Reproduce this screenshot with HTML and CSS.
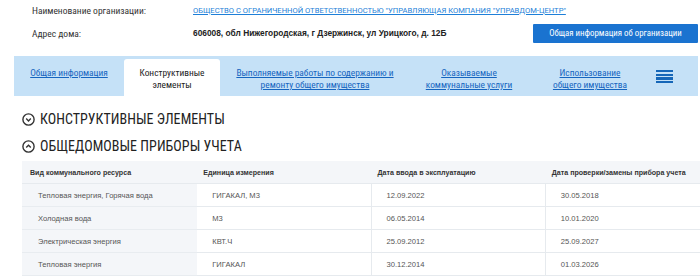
FILE: index.html
```html
<!DOCTYPE html>
<html lang="ru">
<head>
<meta charset="utf-8">
<link rel="stylesheet" href="styles.css">
</head>
<body>
<div class="page">
  <div class="info">
    <div class="info-row">
      <div class="label">Наименование организации:</div>
      <a class="org-link" href="#">ОБЩЕСТВО С ОГРАНИЧЕННОЙ ОТВЕТСТВЕННОСТЬЮ "УПРАВЛЯЮЩАЯ КОМПАНИЯ "УПРАВДОМ-ЦЕНТР"</a>
    </div>
    <div class="info-row row2">
      <div class="label">Адрес дома:</div>
      <div class="address">606008, обл Нижегородская, г Дзержинск, ул Урицкого, д. 12Б</div>
      <div class="btn">Общая информация об организации</div>
    </div>
  </div>

  <nav class="tabs">
    <a class="tab t1" href="#"><span>Общая информация</span></a>
    <div class="tab t2 active"><span>Конструктивные<br>элементы</span></div>
    <a class="tab t3" href="#"><span>Выполняемые работы по содержанию и<br>ремонту общего имущества</span></a>
    <a class="tab t4" href="#"><span>Оказываемые<br>коммунальные услуги</span></a>
    <a class="tab t5" href="#"><span>Использование<br>общего имущества</span></a>
    <div class="burger"><i></i><i></i><i></i><i></i></div>
  </nav>

  <div class="section">
    <svg class="circ" width="13" height="13" viewBox="0 0 13 13"><circle cx="6.5" cy="6.5" r="5.6" fill="none" stroke="#333" stroke-width="1.4"/><path d="M4.2 5.6 L6.5 7.9 L8.8 5.6" fill="none" stroke="#333" stroke-width="1.4"/></svg>
    <span>КОНСТРУКТИВНЫЕ ЭЛЕМЕНТЫ</span>
  </div>
  <div class="section s2">
    <svg class="circ" width="13" height="13" viewBox="0 0 13 13"><circle cx="6.5" cy="6.5" r="5.6" fill="none" stroke="#333" stroke-width="1.4"/><path d="M4.2 7.6 L6.5 5.3 L8.8 7.6" fill="none" stroke="#333" stroke-width="1.4"/></svg>
    <span>ОБЩЕДОМОВЫЕ ПРИБОРЫ УЧЕТА</span>
  </div>

  <table class="grid">
    <thead>
      <tr><th>Вид коммунального ресурса</th><th>Единица измерения</th><th>Дата ввода в эксплуатацию</th><th>Дата проверки/замены прибора учета</th></tr>
    </thead>
    <tbody>
      <tr><td>Тепловая энергия, Горячая вода</td><td>ГИГАКАЛ, М3</td><td>12.09.2022</td><td>30.05.2018</td></tr>
      <tr><td>Холодная вода</td><td>М3</td><td>06.05.2014</td><td>10.01.2020</td></tr>
      <tr><td>Электрическая энергия</td><td>КВТ.Ч</td><td>25.09.2012</td><td>25.09.2027</td></tr>
      <tr><td>Тепловая энергия</td><td>ГИГАКАЛ</td><td>30.12.2014</td><td>01.03.2026</td></tr>
    </tbody>
  </table>
</div>
</body>
</html>
```

FILE: styles.css
```css
html, body { margin: 0; padding: 0; background: #fff; }
body { width: 700px; height: 280px; overflow: hidden; font-family: Roboto, "Liberation Sans", Arial, sans-serif; color: #333; }
.page { width: 720px; }

.info { padding: 3px 0 0 32px; }
.info-row { display: flex; align-items: center; height: 14px; }
.info-row.row2 { margin-top: 6px; height: 20px; }
.label { width: 161px; font-size: 9.5px; color: #333; font-stretch: 75%; }
.org-link { font-family: Roboto, "Liberation Sans", sans-serif; font-size: 7.6px; color: #1e7fd8; text-decoration: underline; }
.address { width: 340px; font-family: "Liberation Sans", Arial, sans-serif; font-weight: bold; font-size: 8.35px; color: #222; }
.btn { width: 165px; height: 19px; background: #1a73d0; color: #fff; font-size: 8.8px; font-stretch: 78%; display: flex; align-items: center; justify-content: center; border-radius: 1px; }

.tabs { margin: 13px 0 0 14px; width: 684px; height: 40px; background: #c5e1f7; display: flex; align-items: stretch; }
.tab { display: flex; justify-content: center; align-items: flex-start; padding-top: 11px; box-sizing: border-box; font-size: 9.4px; font-stretch: 85%; line-height: 12px; text-align: center; color: #1565c0; text-decoration: underline; }
.t1 { width: 110px; }
.t2 { width: 96px; margin-top: 3px; padding-top: 8px; background: #fff; color: #222; text-decoration: none; border-radius: 3px 3px 0 0; height: 41px; }
.t3 { width: 190px; }
.t4 { width: 118px; }
.t5 { width: 124px; }
.burger { margin-left: 4px; padding-top: 14px; display: flex; flex-direction: column; gap: 1.2px; }
.burger i { display: block; width: 17px; height: 2.4px; background: #1566b8; }

.section { display: flex; align-items: center; gap: 5px; margin: 15px 0 0 22px; height: 16px; font-size: 14px; color: #222; font-stretch: 75%; }
.section span { letter-spacing: 0.05px; }
.section.s2 { margin-top: 11px; }
.circ { display: block; }

.grid { margin: 7px 0 0 22px; border-collapse: collapse; table-layout: fixed; width: 698px; font-family: "Liberation Sans", Arial, sans-serif; font-size: 7.6px; }
.grid th, .grid td { width: 174px; text-align: left; border: 1px solid #e6eaee; height: 23px; padding: 0; box-sizing: border-box; }
.grid th { background: #f4f6f9; font-weight: bold; font-size: 7.1px; color: #333; padding-left: 6px; height: 22px; border-color: #f4f6f9; border-bottom-color: #e6eaee; }
.grid td { color: #555; padding-left: 15px; }
.grid td:first-child { background: #f4f6f9; border-color: #f4f6f9; border-bottom-color: #e8ecf0; }
.grid th:first-child { padding-left: 7px; }
```
